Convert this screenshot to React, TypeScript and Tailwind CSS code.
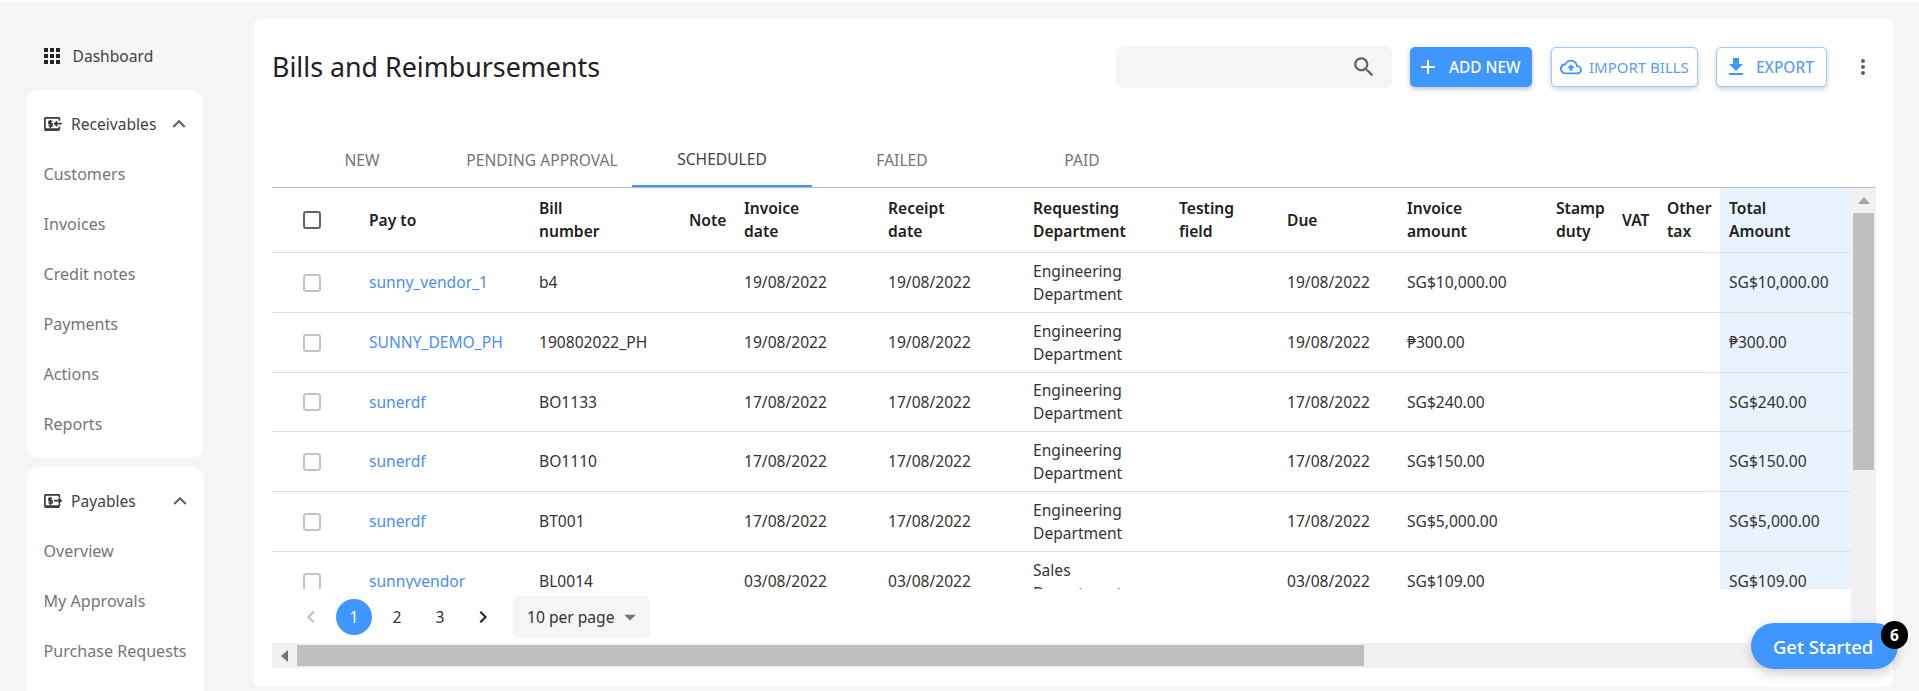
import React from "react";

const P = {
  apps: "M4 8h4V4H4v4zm6 12h4v-4h-4v4zm-6 0h4v-4H4v4zm0-6h4v-4H4v4zm6 0h4v-4h-4v4zm6-10v4h4V4h-4zm-6 4h4V4h-4v4zm6 6h4v-4h-4v4zm0 6h4v-4h-4v4z",
  search: "M15.5 14h-.79l-.28-.27C15.41 12.59 16 11.11 16 9.5 16 5.91 13.09 3 9.5 3S3 5.91 3 9.5 5.91 16 9.5 16c1.61 0 3.09-.59 4.23-1.57l.27.28v.79l5 4.99L20.49 19l-4.99-5zm-6 0C7.01 14 5 11.99 5 9.5S7.01 5 9.5 5 14 7.01 14 9.5 11.99 14 9.5 14z",
  add: "M19 13h-6v6h-2v-6H5v-2h6V5h2v6h6v2z",
  cloud: "M19.35 10.04C18.67 6.59 15.64 4 12 4 9.11 4 6.6 5.64 5.35 8.04 2.34 8.36 0 10.91 0 14c0 3.31 2.69 6 6 6h13c2.76 0 5-2.24 5-5 0-2.64-2.05-4.78-4.65-4.96zM19 18H6c-2.21 0-4-1.79-4-4 0-2.05 1.53-3.76 3.56-3.97l1.07-.11.5-.95C8.08 7.14 9.94 6 12 6c2.62 0 4.88 1.86 5.39 4.43l.3 1.5 1.53.11c1.56.1 2.78 1.41 2.78 2.96 0 1.65-1.35 3-3 3zM8 13h2.55v3h2.9v-3H16l-4-4z",
  download: "M19 9h-4V3H9v6H5l7 7 7-7zM5 18v2h14v-2H5z",
  more: "M12 8c1.1 0 2-.9 2-2s-.9-2-2-2-2 .9-2 2 .9 2 2 2zm0 2c-1.1 0-2 .9-2 2s.9 2 2 2 2-.9 2-2-.9-2-2-2zm0 6c-1.1 0-2 .9-2 2s.9 2 2 2 2-.9 2-2-.9-2-2-2z",
  up: "M12 8l-6 6 1.41 1.41L12 10.83l4.59 4.58L18 14z",
  left: "M15.41 7.41L14 6l-6 6 6 6 1.41-1.41L10.83 12z",
  right: "M10 6L8.59 7.41 13.17 12l-4.58 4.59L10 18l6-6z",
  caret: "M7 10l5 5 5-5z",
};

function Icon({ d, className }: { d: string; className: string }) {
  return (
    <svg viewBox="0 0 24 24" fill="currentColor" className={className}>
      <path d={d} />
    </svg>
  );
}

function MoneyIcon({ out }: { out?: boolean }) {
  return (
    <svg viewBox="0 0 18 14" fill="none" stroke="#3a3a3a" className="w-[18px] h-[14px] shrink-0">
      <path d="M15.4 3.8V1.6a.7.7 0 0 0-.7-.7H1.6a.7.7 0 0 0-.7.7v9.8a.7.7 0 0 0 .7.7h13.1a.7.7 0 0 0 .7-.7V9.6" strokeWidth="1.7" />
      <path d="M.4 13.4h15" strokeWidth="1.1" />
      <path d="M8.2 4.6H4.9v2.1h3.2V9H4.6M6.4 3v8" strokeWidth="1.5" />
      {out ? (
        <path d="M10 6.7h6.8M14.6 4.3l2.4 2.4-2.4 2.4" strokeWidth="1.7" />
      ) : (
        <path d="M17.8 6.7H11M13.2 4.3l-2.4 2.4 2.4 2.4" strokeWidth="1.7" />
      )}
    </svg>
  );
}

function NavGroup({ title, items, out, className }: { title: string; items: string[]; out?: boolean; className: string }) {
  return (
    <div className={className}>
      <div className="h-[50px] flex items-center pl-[17px] text-[#424242]">
        <MoneyIcon out={out} />
        <span className="ml-[9px]">{title}</span>
        <Icon d={P.up} className="ml-auto mr-[11px] w-[26px] h-[26px] text-[#616161]" />
      </div>
      {items.map((i) => (
        <div key={i} className="h-[50px] flex items-center pl-[16.5px] text-[16.1px] text-[#757575]">
          {i}
        </div>
      ))}
    </div>
  );
}

function Sidebar() {
  return (
    <aside className="w-[254px] shrink-0 pl-[27px]">
      <div className="mt-[37px] mb-[17px] h-[34px] flex items-center pl-[13px] text-[#424242]">
        <Icon d={P.apps} className="w-[24px] h-[24px] text-[#212121] shrink-0" />
        <span className="ml-[8.5px]">Dashboard</span>
      </div>
      <NavGroup
        className="w-[176px] h-[368px] py-[9px] bg-white rounded-[12px] mb-[9px]"
        title="Receivables"
        items={["Customers", "Invoices", "Credit notes", "Payments", "Actions", "Reports"]}
      />
      <NavGroup
        className="w-[177px] h-[400px] py-[9px] bg-white rounded-[12px]"
        title="Payables"
        out
        items={["Overview", "My Approvals", "Purchase Requests"]}
      />
    </aside>
  );
}

const cols = [88, 170, 150, 55, 144, 145, 146, 108, 120, 149, 66, 45, 62, 131];

const head: string[][] = [
  ["Pay to"],
  ["Bill", "number"],
  ["Note"],
  ["Invoice", "date"],
  ["Receipt", "date"],
  ["Requesting", "Department"],
  ["Testing", "field"],
  ["Due"],
  ["Invoice", "amount"],
  ["Stamp", "duty"],
  ["VAT"],
  ["Other", "tax"],
  ["Total", "Amount"],
];

const rows = [
  { h: "h-[60px]", to: "sunny_vendor_1", bill: "b4", d: "19/08/2022", dept: "Engineering", amt: "SG$10,000.00" },
  { h: "h-[60px]", to: "SUNNY_DEMO_PH", bill: "190802022_PH", d: "19/08/2022", dept: "Engineering", amt: "₱300.00" },
  { h: "h-[59px]", to: "sunerdf", bill: "BO1133", d: "17/08/2022", dept: "Engineering", amt: "SG$240.00" },
  { h: "h-[60px]", to: "sunerdf", bill: "BO1110", d: "17/08/2022", dept: "Engineering", amt: "SG$150.00" },
  { h: "h-[60px]", to: "sunerdf", bill: "BT001", d: "17/08/2022", dept: "Engineering", amt: "SG$5,000.00" },
  { h: "h-[60px]", to: "sunnyvendor", bill: "BL0014", d: "03/08/2022", dept: "Sales", amt: "SG$109.00" },
];

const td = "pl-[9px] pr-0 border-b border-[#e0e0e0] whitespace-nowrap align-middle";

function Table() {
  return (
    <table className="table-fixed w-[1579px] border-separate border-spacing-0 text-[#333333]">
      <colgroup>
        {cols.map((c, i) => (
          <col key={i} style={{ width: c }} />
        ))}
      </colgroup>
      <thead>
        <tr>
          <th className="h-[65px] border-b border-[#e0e0e0] pl-[31px]">
            <div className="w-[18px] h-[18px] border-2 border-[#616161] rounded-[3px]" />
          </th>
          {head.map((h, i) => (
            <th
              key={i}
              className={
                i === 12
                  ? "h-[65px] pl-[9px] border-b border-[#e0e0e0] bg-[#e9f3fe] text-left font-semibold text-[#212121] whitespace-nowrap"
                  : "h-[65px] pl-[9px] border-b border-[#e0e0e0] text-left font-semibold text-[#212121] whitespace-nowrap"
              }
            >
              {h.map((l) => (
                <div key={l}>{l}</div>
              ))}
            </th>
          ))}
        </tr>
      </thead>
      <tbody>
        {rows.map((r, i) => (
          <tr key={i}>
            <td className={r.h + " border-b border-[#e0e0e0] pl-[31px]"}>
              <div className="w-[18px] h-[18px] border-2 border-[#c4c4c4] rounded-[3px]" />
            </td>
            <td className={r.h + " " + td + " text-[#4a8ff5]"}>{r.to}</td>
            <td className={td}>{r.bill}</td>
            <td className={td}></td>
            <td className={td}>{r.d}</td>
            <td className={td}>{r.d}</td>
            <td className={td}>
              <div>{r.dept}</div>
              <div>Department</div>
            </td>
            <td className={td}></td>
            <td className={td}>{r.d}</td>
            <td className={td}>{r.amt}</td>
            <td className={td}></td>
            <td className={td}></td>
            <td className={td}></td>
            <td className={td + " bg-[#e9f3fe]"}>{r.amt}</td>
          </tr>
        ))}
      </tbody>
    </table>
  );
}

function Pagination() {
  return (
    <div className="h-[54px] flex items-center pl-[21px] gap-[7px] pt-[2px] text-[#333333]">
      <div className="w-[36px] h-[36px] flex items-center justify-center">
        <Icon d={P.left} className="w-[24px] h-[24px] text-[#bdbdbd]" />
      </div>
      <div className="w-[36px] h-[36px] rounded-full bg-[#4096ff] text-white flex items-center justify-center">1</div>
      <div className="w-[36px] h-[36px] flex items-center justify-center">2</div>
      <div className="w-[36px] h-[36px] flex items-center justify-center">3</div>
      <div className="w-[36px] h-[36px] flex items-center justify-center">
        <Icon d={P.right} className="w-[24px] h-[24px] text-[#212121]" />
      </div>
      <div className="ml-[5px] w-[137px] h-[42px] bg-[#f5f5f5] rounded-[6px] flex items-center pl-[14px]">
        <span>10 per page</span>
        <Icon d={P.caret} className="ml-[1px] w-[28px] h-[28px] text-[#757575]" />
      </div>
    </div>
  );
}

export default function App() {
  return (
    <div className="relative w-[1919px] h-[691px] overflow-hidden bg-white font-['Noto_Sans',sans-serif] text-[15.6px] leading-[23px]">
      <div className="mt-[2px] h-[689px] bg-[#f5f5f5] flex">
        <Sidebar />
        <main className="mt-[17px] w-[1639px] h-[668px] bg-white rounded-[6px] pl-[18px] pr-[17px] pt-[28px]">
          <div className="h-[40px] flex items-center">
            <h1 className="text-[26.8px] leading-[36px] font-normal text-[#212121]">Bills and Reimbursements</h1>
            <div className="ml-auto w-[276px] h-[42px] bg-[#f5f5f5] rounded-[7px] flex items-center justify-end pr-[15px]">
              <Icon d={P.search} className="w-[26px] h-[26px] text-[#616161]" />
            </div>
            <button className="ml-[18px] w-[122px] h-[40px] rounded-[5px] bg-[#4096ff] text-white flex items-center pl-[6px] shadow-[0_2px_5px_rgba(0,0,0,0.25)] font-medium text-[15.4px]">
              <Icon d={P.add} className="w-[24px] h-[24px] shrink-0" />
              <span className="ml-[9px]">ADD NEW</span>
            </button>
            <button className="ml-[19px] w-[147px] h-[40px] rounded-[5px] bg-white border border-[#9cc8ff] text-[#5c9dfb] flex items-center pl-[8px] shadow-[0_2px_5px_rgba(0,0,0,0.2)] font-normal text-[15px]">
              <Icon d={P.cloud} className="w-[22px] h-[22px] shrink-0 text-[#4096ff]" />
              <span className="ml-[7px]">IMPORT BILLS</span>
            </button>
            <button className="ml-[18px] w-[111px] h-[40px] rounded-[5px] bg-white border border-[#9cc8ff] text-[#5c9dfb] flex items-center pl-[7px] shadow-[0_2px_5px_rgba(0,0,0,0.2)] font-medium text-[15.4px]">
              <Icon d={P.download} className="w-[24px] h-[24px] shrink-0 text-[#4096ff]" />
              <span className="ml-[8px]">EXPORT</span>
            </button>
            <Icon d={P.more} className="ml-[24px] w-[24px] h-[24px] text-[#616161] shrink-0" />
            <div className="w-[1px]" />
          </div>

          <div className="mt-[46px] flex h-[55px] border-b border-[#bdbdbd] text-[15.6px] text-[#757575]">
            {["NEW", "PENDING APPROVAL", "SCHEDULED", "FAILED", "PAID"].map((t) => (
              <div
                key={t}
                className={
                  t === "SCHEDULED"
                    ? "w-[180px] h-[54px] flex items-center justify-center border-b-2 border-[#4096ff] text-[#424242]"
                    : "w-[180px] h-[54px] flex items-center justify-center"
                }
              >
                {t}
              </div>
            ))}
          </div>

          <div className="flex">
            <div className="w-[1579px]">
              <div className="h-[401px] overflow-hidden">
                <Table />
              </div>
              <Pagination />
            </div>
            <div className="w-[25px] h-[455px] bg-[#f1f1f1] flex flex-col items-center">
              <div className="h-[25px] flex items-center justify-center">
                <div className="w-0 h-0 border-x-[6px] border-x-transparent border-b-[7px] border-b-[#a3a3a3]" />
              </div>
              <div className="w-[21px] h-[257px] bg-[#bfbfbf]" />
            </div>
          </div>

          <div className="w-[1604px] h-[25px] bg-[#f1f1f1] flex items-center">
            <div className="w-[25px] flex items-center justify-center">
              <div className="w-0 h-0 border-y-[6px] border-y-transparent border-r-[7px] border-r-[#757575]" />
            </div>
            <div className="w-[1067px] h-[21px] bg-[#bfbfbf]" />
          </div>
        </main>
      </div>

      <div className="absolute left-[1751px] top-[623px] w-[147px] h-[46px] rounded-full bg-[#4096ff] text-white text-[18.4px] font-medium flex items-center pl-[22px] shadow-[0_4px_12px_rgba(0,0,0,0.2)]">
        Get Started
        <div className="absolute right-[-10px] top-[-2px] w-[27px] h-[28px] rounded-full bg-black text-white text-[15.4px] font-bold flex items-center justify-center">
          6
        </div>
      </div>
    </div>
  );
}
